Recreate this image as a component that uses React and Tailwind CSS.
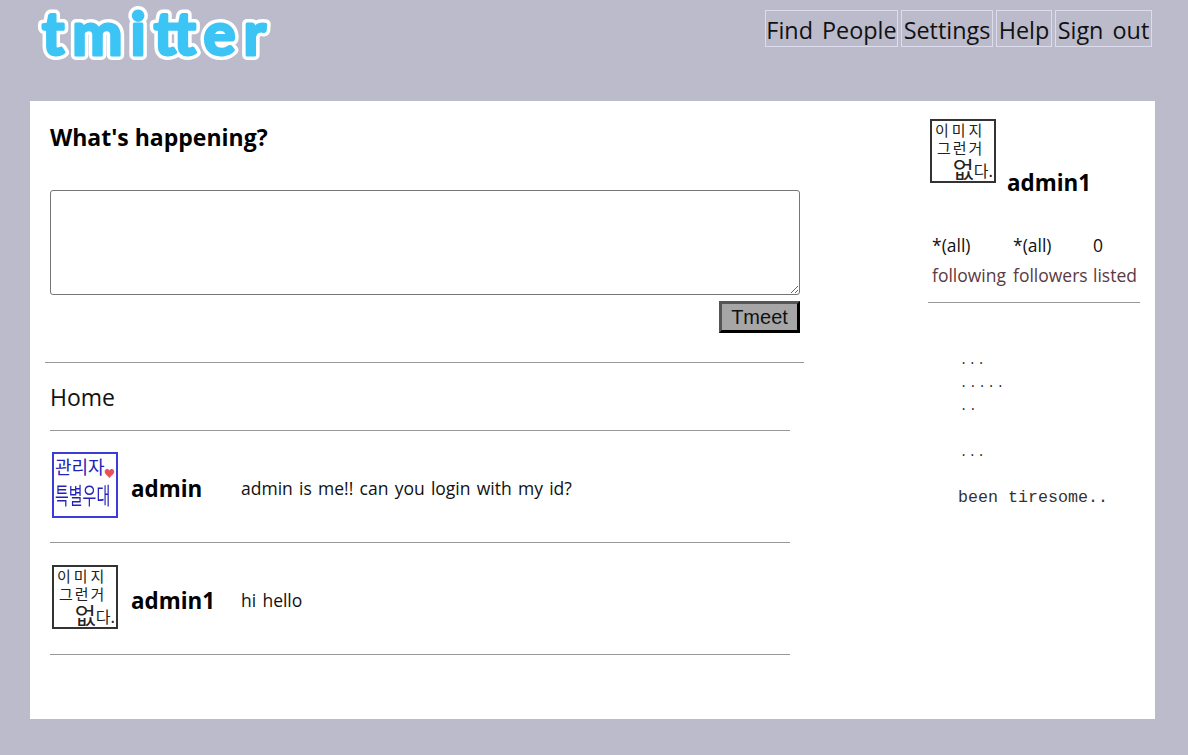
import React from "react";

const sans = "font-['Open_Sans','Noto_Sans',sans-serif]";

const Logo = () => (
  <svg width="240" height="66" viewBox="0 0 240 66" className="block blur-[0.6px]">
    <g fontFamily="Lato, 'Noto Sans', sans-serif" fontWeight="700" fontSize="60" strokeLinejoin="round">
      <text x="8" y="53" textLength="224" lengthAdjust="spacing" fill="#ffffff" stroke="#ffffff" strokeWidth="10">tmitter</text>
      <text x="8" y="53" textLength="224" lengthAdjust="spacing" fill="#3cc4f5" stroke="#3cc4f5" strokeWidth="3">tmitter</text>
    </g>
  </svg>
);

const NoImageAvatar = () => (
  <div className="w-[66px] h-[64px] border-2 border-[#333] bg-white pl-[3px] pr-[1px] text-[#222] font-['Noto_Sans_CJK_KR',sans-serif] overflow-hidden shrink-0">
    <div className="text-[15px] tracking-[3px] leading-[18px] whitespace-nowrap">이미지</div>
    <div className="text-[15px] tracking-[2px] ml-[2px] leading-[17px] whitespace-nowrap">그런거</div>
    <div className="flex justify-end items-end h-[25px]">
      <span className="text-[23px] leading-[25px]">없</span>
      <span className="text-[16px] leading-[22px]">다.</span>
    </div>
  </div>
);

const AdminAvatar = () => (
  <div className="relative w-[66px] h-[66px] border-2 border-[#3b3bd6] bg-white px-[1px] text-[#2222b8] font-['Noto_Sans_CJK_KR',sans-serif] overflow-hidden shrink-0">
    <div className="text-[18px] leading-[24px] whitespace-nowrap">관리자</div>
    <div className="text-[15px] leading-[22px] whitespace-nowrap origin-top scale-y-[1.5]">특별우대</div>
    <span className="absolute right-[1px] top-[14px] text-[11px] leading-none text-[#e8505a]">♥</span>
  </div>
);

const Tweet = ({ avatar, name, text }) => (
  <div className="flex items-center w-[740px] h-[112px] pl-[2px] border-b border-[#999]">
    <div className="mb-[3px]">{avatar}</div>
    <div className="w-[110px] ml-[13px] pt-[4px] text-[22.4px] font-bold text-black">{name}</div>
    <div className="pt-[4px] text-[17.5px] text-[#111] [word-spacing:1.7px]">{text}</div>
  </div>
);

export default function App() {
  return (
    <div className={`min-h-[755px] bg-[#bbbbcc] ${sans}`}>
      <div className="flex justify-between h-[101px] pl-[34px] pr-[36px]">
        <div className="pt-[2px]">
          <Logo />
        </div>
        <nav className="flex gap-[3px] h-[37px] mt-[10px] text-[23.4px] leading-[40px] text-[#111] [word-spacing:3px]">
          <a className="flex items-center justify-center w-[133px] pt-[3px] border border-[#dcdcec] whitespace-pre">Find People</a>
          <a className="flex items-center justify-center w-[92px] pt-[3px] border border-[#dcdcec]">Settings</a>
          <a className="flex items-center justify-center w-[56px] pt-[3px] border border-[#dcdcec]">Help</a>
          <a className="flex items-center justify-center w-[97px] pt-[3px] border border-[#dcdcec] whitespace-pre">Sign out</a>
        </nav>
      </div>

      <div className="flex ml-[30px] w-[1125px] h-[618px] bg-white">
        <div className="w-[898px] pl-[15px] shrink-0">
          <div className="w-[759px] border-b border-[#999] h-[262px] pl-[5px]">
            <h2 className="pt-[18px] text-[23px] font-bold leading-[36px] text-black">What's happening?</h2>
            <textarea className="block mt-[35px] w-[750px] h-[105px] border border-[#767676] rounded-[3px] bg-white resize" />
            <div className="flex justify-end w-[750px] mt-[6px]">
              <button className="w-[81px] h-[32px] border-[3px] border-t-[#555] border-l-[#555] border-b-black border-r-black bg-[#a6a6a6] text-[20px] leading-none text-[#111] font-['Liberation_Sans',sans-serif]">
                Tmeet
              </button>
            </div>
          </div>
          <div className="pl-[5px]">
            <div className="w-[740px] h-[68px] flex items-center pt-[2px] border-b border-[#999] text-[23px] text-[#111]">Home</div>
            <Tweet avatar={<AdminAvatar />} name="admin" text="admin is me!! can you login with my id?" />
            <Tweet avatar={<NoImageAvatar />} name="admin1" text="hi hello" />
          </div>
        </div>

        <div className="w-[212px] shrink-0">
          <div className="h-[202px] border-b border-[#999]">
            <div className="flex items-end pt-[18px] pl-[2px]">
              <NoImageAvatar />
              <span className="ml-[11px] text-[22.4px] leading-[28px] -mb-[14px] font-bold text-black">admin1</span>
            </div>
            <div className="grid grid-cols-[81px_80px_auto] pl-[4px] mt-[47px] text-[17.5px] leading-[30px] text-[#111]">
              <span>*(all)</span>
              <span>*(all)</span>
              <span>0</span>
              <span className="text-[#5b3a42]">following</span>
              <span className="text-[#5b3a42]">followers</span>
              <span className="text-[#5b3a42]">listed</span>
            </div>
          </div>
          <div className="pl-[30px] pt-[47px] font-['Liberation_Mono',monospace] text-[#222]">
            <div className="text-[12px] leading-[23px] tracking-[1.6px] pl-[2px]">...</div>
            <div className="text-[12px] leading-[23px] tracking-[2px] pl-[2px]">.....</div>
            <div className="text-[12px] leading-[23px] tracking-[2px] pl-[2px]">..</div>
            <div className="text-[12px] leading-[23px] tracking-[1.6px] pl-[2px] mt-[23px]">...</div>
            <div className="text-[16.67px] leading-[24px] mt-[21px] whitespace-pre text-[#333]">been tiresome..</div>
          </div>
        </div>
      </div>
    </div>
  );
}
